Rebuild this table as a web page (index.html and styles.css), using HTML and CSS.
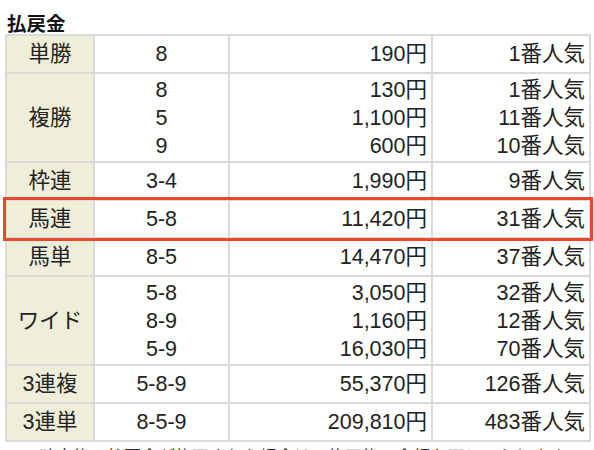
FILE: index.html
```html
<!DOCTYPE html>
<html lang="ja">
<head>
<meta charset="utf-8">
<link rel="stylesheet" href="styles.css">
</head>
<body>
<div class="page">
  <h2 class="title">払戻金</h2>
  <table class="pay">
    <colgroup>
      <col class="c1"><col class="c2"><col class="c3"><col class="c4">
    </colgroup>
    <tr class="single">
      <th>単勝</th><td class="num">8</td><td class="yen">190円</td><td class="pop">1番人気</td>
    </tr>
    <tr class="multi">
      <th>複勝</th><td class="num">8<br>5<br>9</td><td class="yen">130円<br>1,100円<br>600円</td><td class="pop">1番人気<br>11番人気<br>10番人気</td>
    </tr>
    <tr class="single">
      <th>枠連</th><td class="num">3-4</td><td class="yen">1,990円</td><td class="pop">9番人気</td>
    </tr>
    <tr class="single hl">
      <th>馬連</th><td class="num">5-8</td><td class="yen">11,420円</td><td class="pop">31番人気</td>
    </tr>
    <tr class="single">
      <th>馬単</th><td class="num">8-5</td><td class="yen">14,470円</td><td class="pop">37番人気</td>
    </tr>
    <tr class="multi">
      <th>ワイド</th><td class="num">5-8<br>8-9<br>5-9</td><td class="yen">3,050円<br>1,160円<br>16,030円</td><td class="pop">32番人気<br>12番人気<br>70番人気</td>
    </tr>
    <tr class="single">
      <th>3連複</th><td class="num">5-8-9</td><td class="yen">55,370円</td><td class="pop">126番人気</td>
    </tr>
    <tr class="single">
      <th>3連単</th><td class="num">8-5-9</td><td class="yen">209,810円</td><td class="pop">483番人気</td>
    </tr>
  </table>
  <p class="note">※確定後に払戻金が修正された場合は、修正後の金額を正といたします。</p>
</div>
</body>
</html>
```
FILE: styles.css
```css
html, body {
  margin: 0;
  padding: 0;
  background: #ffffff;
}
.page {
  padding: 12px 0 0 5px;
  font-family: "Liberation Sans", "Noto Sans CJK JP", sans-serif;
  color: #222;
}
.title {
  margin: 0 0 0 2px;
  font-size: 19.5px;
  line-height: 22px;
  font-weight: bold;
  font-family: "Noto Sans CJK JP", sans-serif;
  color: #111;
}
.pay {
  border-collapse: collapse;
  width: 584px;
  table-layout: fixed;
  font-size: 21.5px;
  line-height: 28px;
}
.c1 { width: 88px; }
.c2 { width: 135px; }
.c3 { width: 203px; }
.c4 { width: 158px; }
.pay th, .pay td {
  border: 2px solid #dadada;
  padding: 4px 4px;
  vertical-align: middle;
}
.pay th {
  background: #efeed9;
  font-weight: normal;
  text-align: center;
}
.pay .multi th, .pay .multi td {
  padding-top: 2px;
  padding-bottom: 1px;
}
.pay .num { text-align: center; }
.pay .yen { text-align: right; }
.pay .pop { text-align: right; }
.pay tr.hl {
  outline: 3px solid #e8482d;
  outline-offset: 0px;
}
.note {
  margin: 3px 0 0 17px;
  font-size: 17px;
  line-height: 22px;
  color: #333;
  white-space: nowrap;
  font-family: "Noto Sans CJK JP", sans-serif;
}
```
